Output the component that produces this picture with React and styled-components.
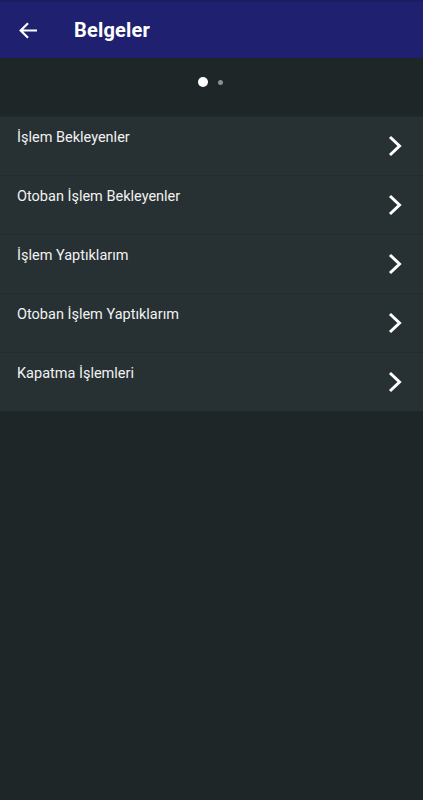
import React from "react";
import styled, { createGlobalStyle } from "styled-components";

const Global = createGlobalStyle`
  html, body { margin: 0; padding: 0; background: #1f2628; }
  body { font-family: Roboto, "Noto Sans", sans-serif; }
  #root { min-height: 800px; background: #1f2628; }
`;

const Page = styled.div`
  width: 423px;
  min-height: 800px;
  background: #1f2628;
  display: flex;
  flex-direction: column;
`;

const AppBar = styled.header`
  height: 58px;
  background: #1f2170;
  display: flex;
  align-items: center;
  padding-left: 18px;
  gap: 35px;
  box-sizing: border-box;
  border-top: 2px solid #1b1d62;
`;

const BackButton = styled.button`
  width: 21px;
  height: 21px;
  padding: 0;
  border: none;
  background: transparent;
  display: flex;
  align-items: center;
  justify-content: center;
  color: #fff;
`;

const Title = styled.h1`
  margin: 0;
  font-size: 20px;
  font-weight: 700;
  color: #ffffff;
  letter-spacing: 0.2px;
`;

const Pager = styled.div`
  height: 58px;
  box-sizing: border-box;
  padding-top: 19px;
  display: flex;
  align-items: flex-start;
  justify-content: center;
  gap: 7px;
`;

const DotSlot = styled.span`
  width: 10px;
  height: 10px;
  display: flex;
  align-items: center;
  justify-content: center;
`;

const Dot = styled.span`
  width: ${(p) => (p.$active ? 10 : 5)}px;
  height: ${(p) => (p.$active ? 10 : 5)}px;
  border-radius: 50%;
  background: ${(p) => (p.$active ? "#ffffff" : "#8a8f92")};
`;

const List = styled.ul`
  list-style: none;
  margin: 0;
  padding: 0;
`;

const Row = styled.li`
  height: 59px;
  background: #273133;
  border-top: 1px solid #222b2d;
  box-sizing: border-box;
  display: flex;
  justify-content: space-between;
  padding: 11px 21px 0 17px;
`;

const Label = styled.span`
  font-size: 14.5px;
  color: #f2f2f2;
  line-height: 20px;
`;

const Chevron = styled.svg`
  width: 14px;
  height: 22px;
  margin-top: 7px;
`;

const items = [
  "İşlem Bekleyenler",
  "Otoban İşlem Bekleyenler",
  "İşlem Yaptıklarım",
  "Otoban İşlem Yaptıklarım",
  "Kapatma İşlemleri",
];

export default function App() {
  return (
    <Page>
      <Global />
      <AppBar>
        <BackButton aria-label="Geri">
          <svg width="19" height="17" viewBox="0 0 19 17" fill="none">
            <path d="M18 8.5H2M9 1.2L1.7 8.5 9 15.8" stroke="#fff" strokeWidth="2.2" />
          </svg>
        </BackButton>
        <Title>Belgeler</Title>
      </AppBar>
      <Pager>
        <DotSlot><Dot $active /></DotSlot>
        <DotSlot><Dot /></DotSlot>
      </Pager>
      <List>
        {items.map((t) => (
          <Row key={t}>
            <Label>{t}</Label>
            <Chevron viewBox="0 0 14 22" fill="none">
              <path d="M2 2L11.5 11 2 20" stroke="#fff" strokeWidth="3" />
            </Chevron>
          </Row>
        ))}
      </List>
    </Page>
  );
}
